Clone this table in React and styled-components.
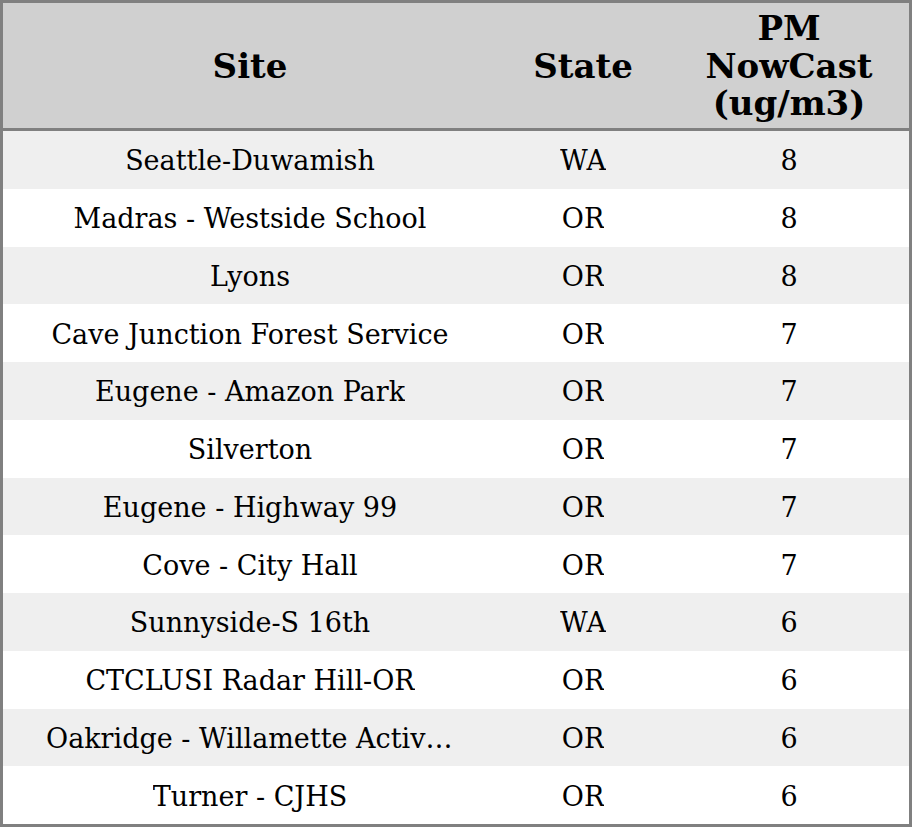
import React from "react";
import styled, { createGlobalStyle } from "styled-components";

const Global = createGlobalStyle`
  html, body { margin: 0; padding: 0; background: #fff; }
  body { font-family: "DejaVu Serif", serif; }
`;

const rows = [
  ["Seattle-Duwamish", "WA", 8],
  ["Madras - Westside School", "OR", 8],
  ["Lyons", "OR", 8],
  ["Cave Junction Forest Service", "OR", 7],
  ["Eugene - Amazon Park", "OR", 7],
  ["Silverton", "OR", 7],
  ["Eugene - Highway 99", "OR", 7],
  ["Cove - City Hall", "OR", 7],
  ["Sunnyside-S 16th", "WA", 6],
  ["CTCLUSI Radar Hill-OR", "OR", 6],
  ["Oakridge - Willamette Activity Center", "OR", 6],
  ["Turner - CJHS", "OR", 6],
];

const Table = styled.div`
  box-sizing: border-box;
  width: 912px;
  height: 827px;
  border: 3px solid #808080;
  display: grid;
  grid-template-columns: 494px 172px 240px;
  grid-template-rows: 128px repeat(12, 1fr);
  color: #000;
`;

const HeadCell = styled.div`
  background: #d0d0d0;
  border-bottom: 3px solid #808080;
  display: flex;
  align-items: center;
  justify-content: center;
  text-align: center;
  font-weight: bold;
  font-size: 34px;
  line-height: 37.5px;
  padding-top: 2px;
`;

const Cell = styled.div`
  background: ${(p) => (p.$shade ? "#efefef" : "#ffffff")};
  display: flex;
  align-items: center;
  justify-content: center;
  font-size: 27px;
  padding: 2px ${(p) => (p.$wide ? "43px" : "0")} 0;
  min-width: 0;
`;

const Text = styled.span`
  display: block;
  white-space: nowrap;
  overflow: hidden;
  text-overflow: ellipsis;
  max-width: 100%;
`;

export default function App() {
  return (
    <>
      <Global />
      <Table>
        <HeadCell>Site</HeadCell>
        <HeadCell>State</HeadCell>
        <HeadCell>
          PM
          <br />
          NowCast
          <br />
          (ug/m3)
        </HeadCell>
        {rows.map(([site, st, v], i) => (
          <React.Fragment key={i}>
            <Cell $shade={i % 2 === 0} $wide>
              <Text>{site}</Text>
            </Cell>
            <Cell $shade={i % 2 === 0}>
              <Text>{st}</Text>
            </Cell>
            <Cell $shade={i % 2 === 0}>
              <Text>{v}</Text>
            </Cell>
          </React.Fragment>
        ))}
      </Table>
    </>
  );
}
